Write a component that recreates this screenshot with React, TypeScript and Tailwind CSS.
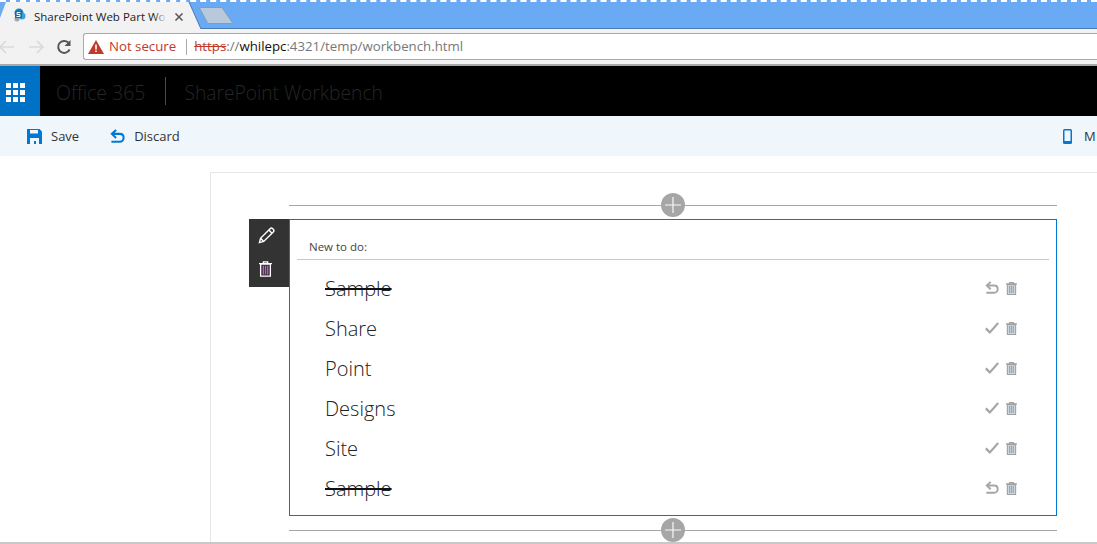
import React from 'react';

const font = "font-['Open_Sans','Noto_Sans',sans-serif]";

const todos = [
    { title: 'Sample', done: true },
    { title: 'Share', done: false },
    { title: 'Point', done: false },
    { title: 'Designs', done: false },
    { title: 'Site', done: false },
    { title: 'Sample', done: true },
];

const UndoIcon = ({ color, size }: { color: string; size: number }) => (
    <svg width={size} height={size} viewBox="0 0 16 16" fill="none" stroke={color} strokeWidth="2.2">
        <path d="M6.500 1 2 5.200 6.500 9.500" />
        <path d="M2.400 5.200h8.100c2.300 0 4 1.600 4 4s-1.700 4.300-4 4.300H1.500" />
    </svg>
);

const TrashIcon = ({ color, bars, fill, width, height }: { color: string; bars: string; fill: string; width: number; height: number }) => (
    <svg width={width} height={height} viewBox="0 0 12 14" fill="none">
        <path d="M0 2h12M4 2V.5h4V2" stroke={color} strokeWidth="1.200" />
        <path d="M1.500 2.500h9v11h-9z" stroke={color} strokeWidth="1.200" fill={fill} />
        <path d="M4 4v8M6 4v8M8 4v8" stroke={bars} strokeWidth="1.200" />
    </svg>
);

const CheckIcon = () => (
    <svg width="14" height="12" viewBox="0 0 14 12" fill="none" stroke="#a6a6a6" strokeWidth="2.200">
        <path d="M.8 6.4 4.8 10.4 13.2 1" />
    </svg>
);

const AddZone = () => (
    <div className="relative h-[1px] w-[768px] bg-[#a6a6a6]">
        <div className="absolute left-[372px] top-[-12px] flex h-6 w-6 items-center justify-center rounded-full bg-[#a6a6a6]">
            <svg width="16" height="16" viewBox="0 0 16 16" stroke="#f4f8fb" strokeWidth="1.2">
                <path d="M8 0v16M0 8h16" />
            </svg>
        </div>
    </div>
);

const BrowserChrome = () => (
    <div className="relative">
        <div className="h-[29px] border-b border-[#4a7ab0] bg-[#6aaaf5]">
            <div className="h-[2px] border-t-2 border-dashed border-white"></div>
        </div>
        {/* tab shape sits over the strip */}
        <svg className="absolute left-0 top-0" width="240" height="30" viewBox="0 0 240 30">
            <path d="M0 18 6 2h183l12 27H0z" fill="#f2f2f2" />
            <path d="M189 2 201 29" stroke="#4a7ab0" fill="none" />
            <path d="M201 7.500h20c1 0 1.500.5 2 1.500l9 13c.4 1-.2 1.500-1 1.500h-22c-1 0-1.500-.5-2-1.500l-7-13c-.4-1 .2-1.500 1-1.500z" fill="#b9c9dc" stroke="#7e9cc0" />
            <circle cx="19" cy="13" r="4.500" fill="#1b7fc4" />
            <circle cx="22" cy="16" r="3.500" fill="#38a3d8" />
            <circle cx="17" cy="19" r="2.500" fill="#9aa5ad" />
            <rect x="15" y="11" width="7" height="7" fill="#0f6cae" />
            <path d="M20.500 12.500h-3.500v2h3v2h-3.500" stroke="#fff" strokeWidth="1" fill="none" />
        </svg>
        <div className={`absolute left-[34px] top-[8px] flex items-center text-[11.500px] text-[#222] ${font}`}>
            <span className="relative w-[141px] whitespace-nowrap">
                SharePoint Web Part Wo
                <span className="absolute left-[119px] top-0 h-full w-[14px] bg-gradient-to-r from-transparent to-[#f2f2f2]"></span>
            </span>
            <svg width="8" height="8" viewBox="0 0 9 9" stroke="#555" strokeWidth="1.700" className="shrink-0">
                <path d="M.5.5l8 8M8.500.5l-8 8" />
            </svg>
        </div>
        <div className="flex h-[37px] items-center border-b-2 border-[#a8a8a8] bg-[#f2f2f2]">
            <div className="flex w-[83px] shrink-0 items-center">
                <svg width="16" height="14" viewBox="0 0 16 14" fill="none" stroke="#dadada" strokeWidth="1.700" className="ml-[-1px]">
                    <path d="M15 7H1M7 1 1 7l6 6" />
                </svg>
                <svg width="16" height="14" viewBox="0 0 16 14" fill="none" stroke="#dadada" strokeWidth="1.700" className="ml-[13px]">
                    <path d="M1 7h14M9 1l6 6-6 6" />
                </svg>
                <svg width="16" height="16" viewBox="0 0 16 16" fill="none" stroke="#555" strokeWidth="2" className="ml-[12px]">
                    <path d="M13.600 10.500A6 6 0 1 1 12.300 3.500" />
                    <path d="M14.500 1v6h-6z" fill="#555" stroke="none" />
                </svg>
            </div>
            <div className={`flex h-[27px] flex-1 items-center rounded-l-[3px] border border-r-0 border-[#aaa] bg-white pl-[4px] text-[13.250px] ${font}`}>
                <svg width="16" height="14" viewBox="0 0 16 14" className="shrink-0">
                    <path d="M8 0 16 14H0z" fill="#c0392b" />
                    <path d="M7.200 4.500h1.600v5H7.200zM7.200 10.500h1.600v1.600H7.200z" fill="#fff" />
                </svg>
                <span className="ml-[5px] text-[#c0392b]">Not secure</span>
                <span className="ml-[10px] h-[16px] w-[1px] bg-[#aaa]"></span>
                <span className="ml-[7px] text-[#c0392b] line-through">https</span>
                <span className="text-[#777]">://</span>
                <span className="text-[#111]">whilepc</span>
                <span className="text-[#777]">:4321/temp/workbench.html</span>
            </div>
        </div>
    </div>
);

const SuiteBar = () => (
    <div className={`flex h-[50px] items-center bg-black ${font}`}>
        <div className="flex h-full w-[40px] items-center bg-[#0072c6] pl-[6px] pt-[2px]">
            <div className="grid grid-cols-3 gap-[2px]">
                {[0, 1, 2, 3, 4, 5, 6, 7, 8].map((i) => (
                    <div key={i} className="h-[5px] w-[5px] bg-white"></div>
                ))}
            </div>
        </div>
        <span className="ml-[16px] mt-[4px] text-[19.500px] font-light text-[#262626]">Office 365</span>
        <span className="ml-[20px] h-[28px] w-[1px] bg-[#4a4a4a]"></span>
        <span className="ml-[18px] mt-[4px] text-[19.200px] font-light text-[#262626]">SharePoint Workbench</span>
    </div>
);

const CommandBar = () => (
    <div className={`flex h-[40px] items-center overflow-hidden bg-[#eff6fc] pl-[27px] text-[13px] text-[#333] ${font}`}>
        <svg width="15" height="15" viewBox="0 0 15 15" className="shrink-0">
            <path d="M0 0h12.500L15 2.500V15H0z" fill="#0078d4" />
            <path d="M3 1h8v3.500H3zM3 9h9v6H3z" fill="#eff6fc" />
            <path d="M7 12h2v3H7z" fill="#0078d4" />
        </svg>
        <span className="ml-[9px] mt-[2px]">Save</span>
        <div className="ml-[31px] shrink-0">
            <UndoIcon color="#0078d4" size={15} />
        </div>
        <span className="ml-[9px] mt-[2px]">Discard</span>
        <div className="ml-auto flex w-[34px] shrink-0 items-center">
            <svg width="9" height="15" viewBox="0 0 9 15" className="shrink-0">
                <rect x="0" y="0" width="9" height="15" rx="1.500" fill="#0078d4" />
                <rect x="1.500" y="1.500" width="6" height="10.500" fill="#eff6fc" />
            </svg>
            <span className="ml-[12px] mt-[2px] whitespace-nowrap">M</span>
        </div>
    </div>
);

const WebPart = () => (
    <div className="relative h-[297px] w-[768px] border border-[#0078d4] bg-white px-[7px]">
        <div className="absolute left-[-41px] top-[-1px] flex h-[68px] w-[40px] flex-col items-start gap-[17px] bg-[#333] pl-[9px] pt-[8px]">
            <svg width="17" height="17" viewBox="0 0 18 18" fill="none" stroke="#fff" strokeWidth="1.500">
                <path d="M1.500 16.500 2.700 12 12.800 1.800c.8-.8 2-.8 2.800 0l.6.6c.8.8.8 2 0 2.800L6 15.300z" />
                <path d="M2.700 12 6 15.300M11.500 3.200l3.300 3.300" />
            </svg>
            <div className="ml-[1px]">
                <TrashIcon color="#fff" bars="#d24ee0" fill="#333" width={13} height={16} />
            </div>
        </div>
        <div className={`flex h-[40px] items-end border-b border-[#c8c8c8] pb-[4px] pl-[12px] text-[11.500px] text-[#444] ${font}`}>
            New to do:
        </div>
        <div className="pt-[8px]">
            {todos.map((todo, index) => (
                <div key={index} className="flex h-[40px] items-center pl-[28px]">
                    <span className={`mt-[2px] text-xl font-light text-[#222] ${font} ${todo.done ? 'line-through decoration-[#111]' : ''}`}>
                        {todo.title}
                    </span>
                    <div className="ml-auto mr-[32px] flex items-center gap-[7px]">
                        <div className="flex w-[14px] justify-center">
                            {todo.done ? <UndoIcon color="#a6a6a6" size={14} /> : <CheckIcon />}
                        </div>
                        <TrashIcon color="#a0a0a0" bars="#98a6b4" fill="#ccd6df" width={11} height={13} />
                    </div>
                </div>
            ))}
        </div>
    </div>
);

export default function App() {
    return (
        <div className="h-[544px] w-[1097px] overflow-hidden bg-white">
            <BrowserChrome />
            <SuiteBar />
            <CommandBar />
            <div className="h-[388px] border-b-2 border-[#c8c8c8] pl-[210px] pt-[16px]">
                <div className="h-[370px] border-l border-t border-[#e6e6e6] pl-[78px] pt-[32px]">
                    <AddZone />
                    <div className="mt-[13px]">
                        <WebPart />
                    </div>
                    <div className="mt-[14px]">
                        <AddZone />
                    </div>
                </div>
            </div>
        </div>
    );
}
